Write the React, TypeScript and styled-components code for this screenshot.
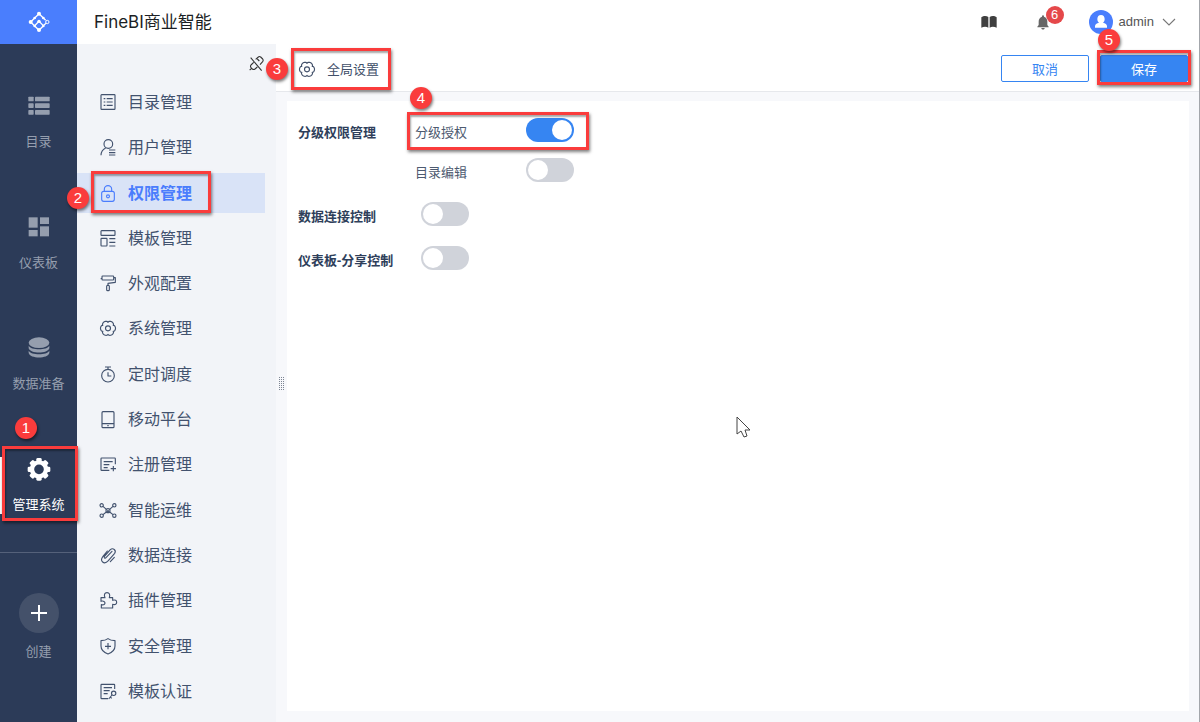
import React from 'react';
import styled, { createGlobalStyle, css } from 'styled-components';

const GlobalStyle = createGlobalStyle`
  *, *::before, *::after { box-sizing: border-box; }
  body {
    margin: 0;
    background: #f7f8fb;
    color: #3d4d66;
    font-family: "Noto Sans", "Noto Sans CJK SC", sans-serif;
    font-size: 13px;
    line-height: 20px;
  }
  a { color: inherit; text-decoration: none; }
  button { font: inherit; color: inherit; background: none; border: 0; padding: 0; cursor: pointer; }
  svg { display: block; flex: none; overflow: visible; }
`;

/* ---------- tutorial marks ---------- */

const Frame = styled.span<{ $inset: string }>`
  position: absolute;
  inset: ${(p) => p.$inset};
  z-index: 3;
  border: 3px solid #fa3c3c;
  box-shadow: 1px 2px 3px rgba(0, 0, 0, 0.5), inset 1px 2px 2px rgba(0, 0, 0, 0.35);
  pointer-events: none;
`;

const Step = styled.span<{ $left: number; $top: number }>`
  position: absolute;
  left: ${(p) => p.$left}px;
  top: ${(p) => p.$top}px;
  z-index: 4;
  width: 22px;
  height: 22px;
  border-radius: 50%;
  background: #fa3c3c;
  box-shadow: 1px 2px 3px rgba(0, 0, 0, 0.5);
  color: #fff;
  font-family: "Liberation Sans", sans-serif;
  font-size: 15px;
  font-weight: 400;
  line-height: 22px;
  text-align: center;
`;

/* ---------- page frame ---------- */

const Page = styled.div`
  display: flex;
  min-height: 100vh;
  border-right: 1px solid #a3a6ab;
`;

const Rail = styled.aside`
  display: flex;
  flex-direction: column;
  flex: none;
  width: 77px;
  background: #2c3b58;
  color: #959eae;
`;

const Logo = styled.a`
  display: flex;
  align-items: center;
  justify-content: center;
  height: 44px;
  background: #4a7efd;
`;

const RailNav = styled.nav`
  display: flex;
  flex-direction: column;
  gap: 64px;
  padding: 50px 0 38px;
  border-bottom: 1px solid #55617a;
`;

const RailLink = styled.a<{ $active?: boolean }>`
  position: relative;
  display: flex;
  flex-direction: column;
  align-items: center;
  gap: 13px;
  white-space: nowrap;
  ${(p) =>
    p.$active &&
    css`
      color: #fff;
      &::before {
        content: '';
        position: absolute;
        left: 0;
        top: 0;
        bottom: 0;
        width: 2px;
        background: #fff;
      }
    `}
`;

const CreateButton = styled.button`
  display: flex;
  flex-direction: column;
  align-items: center;
  gap: 8px;
  margin-top: 40px;
`;

const CreateCircle = styled.span`
  display: flex;
  align-items: center;
  justify-content: center;
  width: 40px;
  height: 40px;
  border-radius: 50%;
  background: #44516a;
  color: #fff;
`;

const Workspace = styled.div`
  display: flex;
  flex-direction: column;
  flex: 1;
  min-width: 0;
`;

const Header = styled.header`
  display: flex;
  align-items: center;
  height: 44px;
  padding: 0 23px 0 17px;
  background: #fff;
`;

const Brand = styled.h1`
  flex: 1;
  margin: 0;
  color: #1c1f24;
  font-family: Inter, "Noto Sans CJK SC", sans-serif;
  font-size: 17px;
  font-weight: 400;
  line-height: 24px;
`;

const HeaderTools = styled.div`
  display: flex;
  align-items: center;
  gap: 38px;
`;

const IconButton = styled.button`
  position: relative;
  display: flex;
`;

const Count = styled.span`
  position: absolute;
  left: 11px;
  top: -8px;
  width: 18px;
  height: 18px;
  border-radius: 50%;
  background: #e5484a;
  color: #fff;
  font-family: "Liberation Sans", sans-serif;
  font-size: 13px;
  line-height: 18px;
  text-align: center;
`;

const UserButton = styled.button`
  position: relative;
  display: flex;
  align-items: center;
  gap: 6px;
  color: #555;
  font-family: "Liberation Sans", sans-serif;
  font-size: 13px;
`;

const Body = styled.div`
  display: flex;
  flex: 1;
`;

/* ---------- side menu ---------- */

const Side = styled.nav`
  display: flex;
  flex-direction: column;
  flex: none;
  width: 199px;
  padding: 11px 0 11px;
  background: #f2f4f8;
`;

const Unpin = styled.button`
  align-self: flex-end;
  margin: 0 11px 9px 0;
  color: #333;
`;

const Menu = styled.ul`
  display: flex;
  flex: 1;
  flex-direction: column;
  justify-content: space-between;
  margin: 0;
  padding: 0;
  list-style: none;
`;

const MenuLink = styled.a<{ $active?: boolean }>`
  position: relative;
  display: flex;
  align-items: center;
  gap: 11px;
  height: 40px;
  margin-right: 11px;
  padding-left: 22px;
  color: ${(p) => (p.$active ? '#4a7dfd' : '#42526e')};
  background: ${(p) => (p.$active ? '#d9e3f7' : 'transparent')};
  font-size: 16px;
  font-weight: ${(p) => (p.$active ? 700 : 400)};
  line-height: 24px;
`;

/* ---------- main area ---------- */

const Main = styled.main`
  display: flex;
  flex-direction: column;
  flex: 1;
  min-width: 0;
`;

const Toolbar = styled.div`
  display: flex;
  align-items: center;
  justify-content: space-between;
  height: 48px;
  padding: 2px 11px 0 22px;
  background: #fff;
  border-bottom: 1px solid #e6e8ec;
`;

const PageTitle = styled.h2`
  position: relative;
  display: flex;
  align-items: center;
  gap: 11px;
  margin: 0;
  color: #42506a;
  font-size: 13px;
  font-weight: 400;
  line-height: 20px;
`;

const Actions = styled.div`
  display: flex;
  gap: 11px;
`;

const ActionSlot = styled.span`
  position: relative;
  display: flex;
`;

const Button = styled.button<{ $primary?: boolean }>`
  width: 88px;
  height: 27px;
  border: 1px solid #3685f2;
  border-radius: 2px;
  background: ${(p) => (p.$primary ? '#3685f2' : '#fff')};
  color: ${(p) => (p.$primary ? '#fff' : '#3685f2')};
`;

const Content = styled.div`
  display: flex;
  flex: 1;
  padding: 9px 10px 11px 0;
`;

const Splitter = styled.div`
  display: flex;
  align-items: center;
  justify-content: center;
  flex: none;
  width: 11px;
  padding-bottom: 46px;
  color: #7d8593;
`;

const Panel = styled.form`
  flex: 1;
  padding: 17px 11px;
  background: #fff;
`;

const Group = styled.fieldset`
  display: flex;
  align-items: flex-start;
  min-width: 0;
  margin: 0 0 20px;
  padding: 0;
  border: 0;
`;

const GroupName = styled.span`
  flex: none;
  width: 117px;
  color: #2f3f5b;
  font-weight: 700;
  line-height: 28px;
  height: 24px;
`;

const Options = styled.div`
  display: flex;
  flex-direction: column;
  gap: 16px;
`;

const Option = styled.label`
  position: relative;
  display: flex;
  height: 24px;
  color: #4d5a70;
  line-height: 28px;
`;

const OptionName = styled.span`
  width: 111px;
`;

const SoloName = styled(GroupName)`
  width: 123px;
`;

const Switch = styled.input.attrs({ type: 'checkbox', role: 'switch' })`
  appearance: none;
  width: 48px;
  height: 24px;
  margin: 0;
  padding: 2px;
  border-radius: 12px;
  background: #d0d3da;
  cursor: pointer;
  &::before {
    content: '';
    display: block;
    width: 20px;
    height: 20px;
    border-radius: 50%;
    background: #fff;
  }
  &:checked { background: #3685f2; }
  &:checked::before { margin-left: auto; }
`;

const Pointer = styled.svg`
  position: fixed;
  left: 736px;
  top: 416px;
`;

/* ---------- icons ---------- */

/* Six wide lobes parted by narrow notches. */
function lobedPath(cx: number, cy: number, r: number, amp: number) {
  const pts: string[] = [];
  for (let i = 0; i < 72; i++) {
    const t = (i / 72) * Math.PI * 2;
    const d = r + amp * Math.sqrt(Math.abs(Math.cos(3 * t)));
    pts.push(`${(cx + d * Math.cos(t)).toFixed(1)} ${(cy + d * Math.sin(t)).toFixed(1)}`);
  }
  return `M${pts.join('L')}Z`;
}

const Line = ({ children, weight = 3.4 }: { children: React.ReactNode; weight?: number }) => (
  <svg width="18" height="18" viewBox="0 0 54 54" fill="none" stroke="currentColor" strokeWidth={weight} strokeLinejoin="round" aria-hidden="true">
    {children}
  </svg>
);

const Cog = () => (
  <Line>
    <path d={lobedPath(27, 28, 18, 4.5)} />
    <circle cx="27" cy="28" r="7.5" />
  </Line>
);

const menu: { name: string; icon: React.ReactNode; active?: boolean }[] = [
  { name: '目录管理', icon: <Line><rect x="6" y="5" width="42" height="44" rx="2" /><path d="M14 17h5M14 27h5M14 37h5M23 17h18M23 27h18M23 37h18" /></Line> },
  { name: '用户管理', icon: <Line><circle cx="28" cy="18" r="13" /><path d="M6 52C6 41 12 34 20 30M30 36h19M30 44h19M30 51h19" /></Line> },
  { name: '权限管理', active: true, icon: <Line><rect x="8" y="22" width="38" height="30" rx="6" /><path d="M16 22v-6a11 11 0 0 1 22 0v6" /><circle cx="27" cy="37" r="4.5" /></Line> },
  { name: '模板管理', icon: <Line><rect x="6" y="5" width="42" height="14" rx="2" /><rect x="6" y="28" width="18" height="23" rx="2" /><path d="M31 29h18M31 40h18M31 51h18" /></Line> },
  { name: '外观配置', icon: <Line><path d="M5 14h4v-6q0-2 2-2h31q2 0 2 2v8q0 2-2 2h-31q-2 0-2-4M44 11h5v14L27 28v6" /><rect x="23" y="34" width="8" height="16" rx="3" /></Line> },
  { name: '系统管理', icon: <Cog /> },
  { name: '定时调度', icon: <Line><circle cx="27" cy="32" r="19" /><path d="M18 6h18M27 6v7M27 22v11h10" /></Line> },
  { name: '移动平台', icon: <Line><rect x="9" y="5" width="36" height="48" rx="3" /><path d="M9 41h36M25 47h4" /></Line> },
  { name: '注册管理', icon: <Line><path d="M31 46H8q-2 0-2-2V11q0-2 2-2h39q2 0 2 2v17M14 20h27M14 29h17M14 38h12M43 33v16M35 41h16" /></Line> },
  { name: '智能运维', icon: <Line><circle cx="8" cy="13" r="5" /><circle cx="46" cy="13" r="5" /><circle cx="8" cy="44" r="5" /><circle cx="46" cy="44" r="5" /><circle cx="27" cy="29" r="6" /><path d="M12 16l10 9M42 16l-10 9M12 41l10-8M42 41l-10-8M24 34l3-6 3 6" /></Line> },
  { name: '数据连接', icon: <Line><path d="M38 16L20 35c-3 4-8-1-4-5L33 11c8-7 19 2 13 11L27 44C14 58 0 45 11 31L24 15M45 34L33 47" transform="translate(1 0)" strokeLinecap="round" /></Line> },
  { name: '插件管理', icon: <Line><path d="M6 20h12C14 10 17 5 24 5s10 5 7 15h10v8c8-3 12 1 12 6s-4 9-12 6v11H7V41c8 2 11-2 11-5s-4-8-12-5Z" /></Line> },
  { name: '安全管理', icon: <Line><path d="M27 5C33 10 41 11 48 11v16c0 12-10 20-21 24C16 47 6 39 6 27V11c8 0 15-1 21-6ZM27 18v19M18 28h18" /></Line> },
  { name: '模板认证', icon: <Line><path d="M27 50H8q-2 0-2-2V9q0-2 2-2h37q2 0 2 2v12M14 17h25M14 26h18M14 35h12M39 39L29 51M34 45l4 4" /><circle cx="44" cy="34" r="6.5" /></Line> },
];

const RailIcon = ({ children }: { children: React.ReactNode }) => (
  <svg width="24" height="24" viewBox="0 0 72 72" fill="currentColor" aria-hidden="true">{children}</svg>
);

const rail: { name: string; icon: React.ReactNode; active?: boolean }[] = [
  {
    name: '目录',
    icon: (
      <RailIcon>
        {[8, 28, 48].map((y) => (
          <React.Fragment key={y}>
            <rect x="4" y={y} width="16" height="14" rx="2" />
            <rect x="24" y={y} width="44" height="14" rx="2" />
          </React.Fragment>
        ))}
      </RailIcon>
    ),
  },
  {
    name: '仪表板',
    icon: (
      <RailIcon>
        <rect x="5" y="7" width="27" height="31" />
        <rect x="39" y="7" width="27" height="20" />
        <rect x="5" y="45" width="27" height="19" />
        <rect x="39" y="34" width="27" height="30" />
      </RailIcon>
    ),
  },
  {
    name: '数据准备',
    icon: (
      <RailIcon>
        <ellipse cx="36" cy="20" rx="31" ry="16" />
        <path d="M5 29C12 43 60 43 67 29V37C63 54 9 54 5 37Z" />
        <path d="M5 44C12 58 60 58 67 44V51C63 69 9 69 5 51Z" />
      </RailIcon>
    ),
  },
  {
    name: '管理系统',
    active: true,
    icon: (
      <RailIcon>
        <circle cx="36" cy="37" r="21" fill="none" stroke="currentColor" strokeWidth="13" />
        {[0, 45, 90, 135, 180, 225, 270, 315].map((a) => (
          <rect key={a} x="28" y="3" width="16" height="12" rx="4" transform={`rotate(${a} 36 37)`} />
        ))}
      </RailIcon>
    ),
  },
];

const settings = [
  { id: 'data-link', name: '数据连接控制' },
  { id: 'dashboard-share', name: '仪表板-分享控制' },
];

export default function App() {
  return (
    <Page>
      <GlobalStyle />
      <Rail>
        <Logo href="#home" aria-label="FineBI">
          <svg width="22" height="22" viewBox="0 0 66 66" fill="none" stroke="#fff" strokeWidth="4" aria-hidden="true">
            <path d="M33 8L8 33l25 25 12-12M33 8l20 20M33 31L20 44M33 31l13 13 8-7" />
            <g fill="#fff" stroke="none">
              <circle cx="33" cy="8" r="6" />
              <circle cx="8" cy="33" r="6" />
              <circle cx="33" cy="57" r="6" />
              <circle cx="33" cy="31" r="5" />
              <circle cx="20" cy="21" r="4" />
              <circle cx="46" cy="21" r="4" />
              <circle cx="20" cy="45" r="4" />
              <circle cx="46" cy="45" r="4" />
            </g>
            <circle cx="58" cy="33" r="5" strokeWidth="3" />
          </svg>
        </Logo>
        <RailNav>
          {rail.map((r) => (
            <RailLink key={r.name} href={`#${r.name}`} $active={r.active}>
              {r.icon}
              {r.name}
              {r.active && (
                <>
                  <Frame $inset="-11px -1px -7px 2px" />
                  <Step $left={15} $top={-40}>1</Step>
                </>
              )}
            </RailLink>
          ))}
        </RailNav>
        <CreateButton type="button">
          <CreateCircle>
            <svg width="16" height="16" viewBox="0 0 16 16" stroke="currentColor" strokeWidth="2" aria-hidden="true">
              <path d="M8 0v16M0 8h16" />
            </svg>
          </CreateCircle>
          创建
        </CreateButton>
      </Rail>

      <Workspace>
        <Header>
          <Brand>FineBI商业智能</Brand>
          <HeaderTools>
            <IconButton type="button" aria-label="帮助文档">
              <svg width="16" height="16" viewBox="0 0 48 48" fill="#3f3f3f" aria-hidden="true">
                <path d="M1 10C8 4 17 5 22 9v32C17 37 8 37 1 41ZM26 9c5-4 14-5 21 1v31c-7-4-16-4-21 0Z" />
              </svg>
            </IconButton>
            <IconButton type="button" aria-label="消息">
              <svg width="16" height="16" viewBox="0 0 48 48" fill="#666" aria-hidden="true">
                <path d="M24 4c2 0 3 2 3 4 7 2 10 8 10 15v10l4 5v2H7v-2l4-5V23c0-7 3-13 10-15 0-2 1-4 3-4ZM19 42h10c0 6-10 6-10 0Z" />
              </svg>
              <Count>6</Count>
            </IconButton>
            <UserButton type="button">
              <svg width="24" height="24" viewBox="0 0 72 72" aria-hidden="true">
                <circle cx="36" cy="36" r="36" fill="#4a7efd" />
                <path d="M36 15c7 0 11 5 11 12 0 5-2 9-5 11 7 2 12 5 12 11v4H18v-4c0-6 5-9 12-11-3-2-5-6-5-11 0-7 4-12 11-12Z" fill="#fff" />
              </svg>
              admin
              <svg width="16" height="12" viewBox="0 0 16 12" fill="none" stroke="#777" strokeWidth="1.1" aria-hidden="true">
                <path d="M3 3l6 6 6-6" />
              </svg>
            </UserButton>
          </HeaderTools>
        </Header>

        <Body>
          <Side>
            <Unpin type="button" aria-label="取消固定">
              <Line weight={3.2}>
                <path d="M11 8L44 47M26 13l8-7q3-3 7 0l6 6q3 4 0 8l-8 9M31 12l6 6M20 22l-8 8q-3 4 0 8l4 4q4 3 8 0l7-6M8 45l5-4" />
              </Line>
            </Unpin>
            <Menu>
              {menu.map((m) => (
                <li key={m.name}>
                  <MenuLink href={`#${m.name}`} $active={m.active}>
                    {m.icon}
                    {m.name}
                    {m.active && (
                      <>
                        <Frame $inset="-2px 54px 0 14px" />
                        <Step $left={-10} $top={14}>2</Step>
                      </>
                    )}
                  </MenuLink>
                </li>
              ))}
            </Menu>
          </Side>

          <Main>
            <Toolbar>
              <PageTitle>
                <Cog />
                全局设置
                <Frame $inset="-11px -12px -11px -7px" />
                <Step $left={-32} $top={-1}>3</Step>
              </PageTitle>
              <Actions>
                <Button type="button">取消</Button>
                <ActionSlot>
                  <Button type="submit" form="global-settings" $primary>保存</Button>
                  <Frame $inset="-5px -3px -3px" />
                  <Step $left={-2} $top={-26}>5</Step>
                </ActionSlot>
              </Actions>
            </Toolbar>
            <Content>
              <Splitter>
                <svg width="5" height="13" viewBox="0 0 5 13" fill="currentColor" shapeRendering="crispEdges" aria-hidden="true">
                  {[0, 2, 4, 6, 8, 10, 12].map((y) => (
                    <path key={y} d={`M0 ${y}h1v1h-1zM2 ${y}h1v1h-1zM4 ${y}h1v1h-1z`} />
                  ))}
                </svg>
              </Splitter>
              <Panel id="global-settings" onSubmit={(e) => e.preventDefault()}>
                <Group aria-labelledby="levels">
                  <GroupName id="levels">分级权限管理</GroupName>
                  <Options>
                    <Option>
                      <OptionName>分级授权</OptionName>
                      <Switch defaultChecked />
                      <Frame $inset="-6px -15px -8px -8px" />
                      <Step $left={-5} $top={-31}>4</Step>
                    </Option>
                    <Option>
                      <OptionName>目录编辑</OptionName>
                      <Switch />
                    </Option>
                  </Options>
                </Group>
                {settings.map((s) => (
                  <Group key={s.id}>
                    <SoloName as="label" htmlFor={s.id}>{s.name}</SoloName>
                    <Switch id={s.id} />
                  </Group>
                ))}
              </Panel>
            </Content>
          </Main>
        </Body>
      </Workspace>

      <Pointer width="14" height="22" viewBox="0 0 14 22" fill="#fff" stroke="#444" aria-hidden="true">
        <path d="M1 1v17l4-3 3 6 3-1-2-6h5Z" />
      </Pointer>
    </Page>
  );
}
